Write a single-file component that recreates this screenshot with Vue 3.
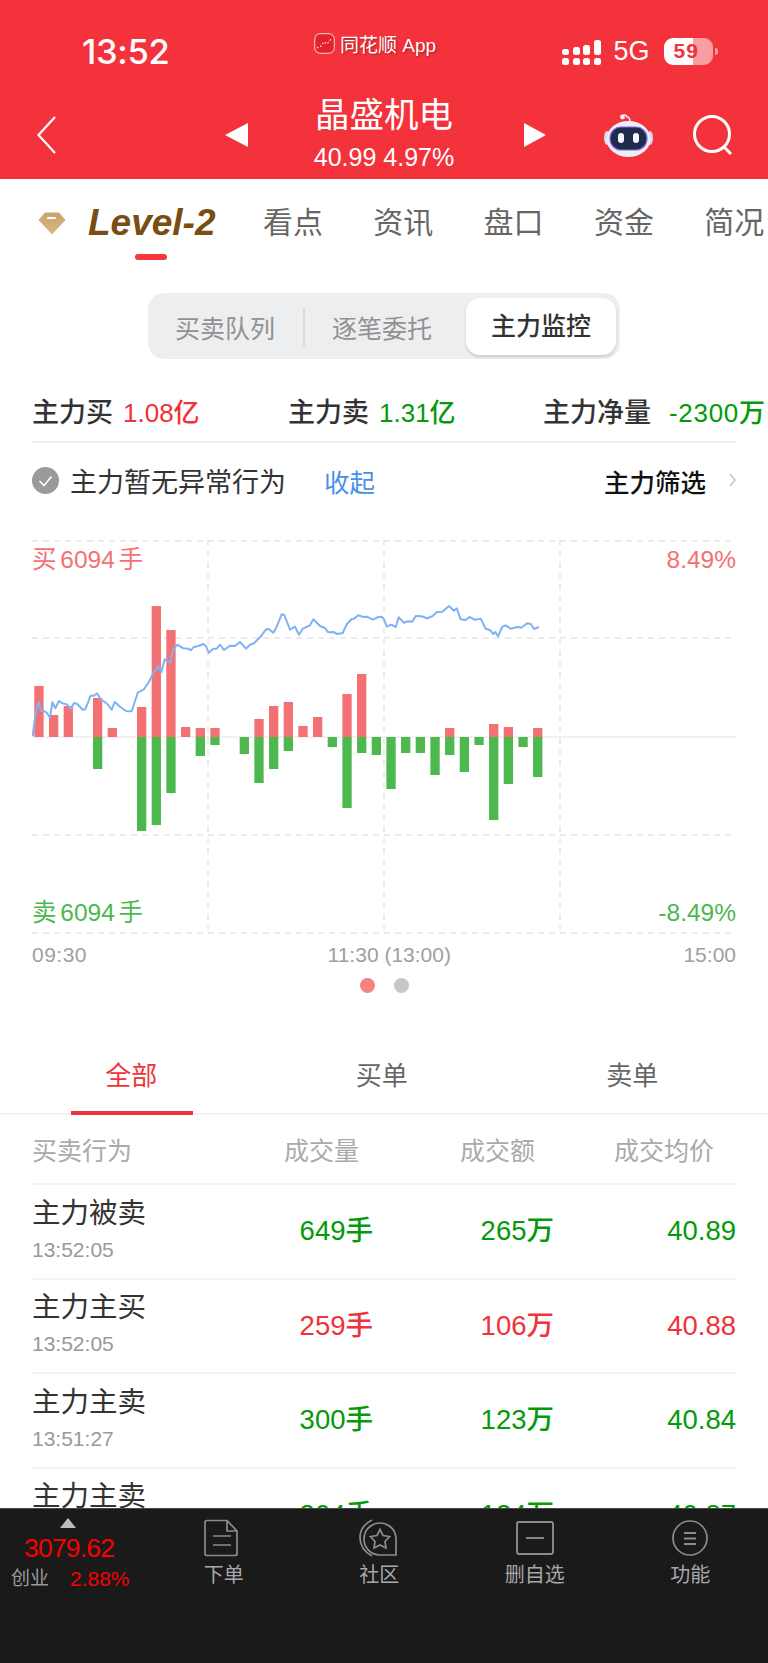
<script setup>
// bars measured as [buy, sell] heights in px, one entry per 14.67px slot
const bars = [
  [51, 0], [22, 0], [31, 0], [0, 0], [39, 32], [9, 0], [0, 0], [30, 94], [131, 88], [107, 56],
  [10, 0], [9, 19], [9, 8], [0, 0], [0, 17], [18, 46], [31, 32], [35, 14], [11, 0], [20, 0],
  [0, 10], [43, 71], [63, 16], [0, 18], [0, 52], [0, 16], [0, 16], [0, 38], [9, 18], [0, 35],
  [0, 8], [13, 83], [10, 47], [0, 10], [9, 40]
]

const rawLine = [
  [98,648],[103,610],[110,565],[116,545],[122,572],[130,572],[140,578],[150,593],[157,547],[166,565],
  [177,543],[187,550],[200,553],[212,567],[222,549],[232,552],[248,569],[256,568],[272,527],[282,527],
  [291,520],[302,538],[322,552],[335,569],[344,546],[360,560],[378,573],[395,574],[413,518],[432,508],
  [448,484],[462,455],[475,439],[484,457],[494,418],[510,428],[520,388],[532,374],[550,385],[565,386],
  [572,391],[580,382],[595,378],[610,372],[618,378],[626,398],[640,386],[650,386],[660,374],[672,390],
  [690,377],[705,378],[720,366],[738,386],[750,374],[762,370],[780,352],[798,328],[806,327],[820,338],
  [828,325],[845,283],[853,285],[870,329],[885,320],[897,344],[908,326],[930,316],[940,298],[960,318],
  [975,324],[985,337],[1000,336],[1012,342],[1028,339],[1040,313],[1055,297],[1062,296],[1075,286],[1090,291],
  [1100,290],[1118,299],[1135,291],[1145,290],[1152,298],[1160,320],[1174,314],[1187,321],[1196,292],[1212,308],
  [1224,304],[1237,305],[1247,288],[1264,289],[1282,295],[1297,289],[1310,277],[1327,275],[1347,258],[1362,272],
  [1370,265],[1382,298],[1397,300],[1408,291],[1424,299],[1442,296],[1457,326],[1470,330],[1480,342],[1486,336],
  [1494,349],[1507,320],[1517,316],[1532,326],[1552,321],[1564,323],[1582,310],[1592,312],[1602,327],[1617,321]
]
// traced from a 3x crop whose origin is (0,520); the svg starts at (32,540)
const linePoints = rawLine.map(([x, y]) => `${(x / 3 - 32).toFixed(1)},${(y / 3 - 20).toFixed(1)}`).join(' ')

const tabs = ['看点', '资讯', '盘口', '资金', '简况']

const rows = [
  { name: '主力被卖', time: '13:52:05', vol: '649手', amt: '265万', price: '40.89', up: false },
  { name: '主力主买', time: '13:52:05', vol: '259手', amt: '106万', price: '40.88', up: true },
  { name: '主力主卖', time: '13:51:27', vol: '300手', amt: '123万', price: '40.84', up: false },
  { name: '主力主卖', time: '13:51:02', vol: '304手', amt: '124万', price: '40.87', up: false }
]
</script>

<template>
  <div class="page">
    <div class="main">
      <header class="head">
        <div class="status">
          <span class="clock">13:52</span>
          <span class="source">
            <svg class="source-icon" width="21" height="21" viewBox="0 0 21 21">
              <rect x="0.7" y="0.7" width="19.6" height="19.6" rx="5.5" fill="#e5212b" stroke="#f9b4b7" stroke-width="1.2" />
              <path d="M3 15 L7 13 L10 9 L13 11 L17 6" fill="none" stroke="#fff" stroke-width="1.1" stroke-dasharray="1.5 2" />
            </svg>
            同花顺 App
          </span>
          <span class="signal">
            <i v-for="h in [6, 8, 10, 15]" :key="h" class="sig-col">
              <b :style="{ height: h + 'px' }"></b>
              <b class="sig-dot"></b>
            </i>
          </span>
          <span class="net">5G</span>
          <span class="battery"><span class="battery-num">59</span></span>
          <span class="battery-tip"></span>
        </div>

        <div class="nav">
          <svg class="back" width="19" height="38" viewBox="0 0 19 38">
            <path d="M18 1 L1.5 19 L18 37" fill="none" stroke="#fff" stroke-width="2.2" />
          </svg>
          <span class="arrow arrow-left"></span>
          <div class="stock">
            <div class="stock-name">晶盛机电</div>
            <div class="stock-price">40.99 4.97%</div>
          </div>
          <span class="arrow arrow-right"></span>
          <svg class="robot" width="49" height="44" viewBox="0 0 49 44">
            <path d="M18 6 C17 1 23 1 23 4 C25 4 26 6 26 9" fill="none" stroke="#e8e6f5" stroke-width="1.6" />
            <circle cx="18.5" cy="4" r="2.4" fill="#f1effa" />
            <ellipse cx="3" cy="25" rx="3" ry="7" fill="#d9d7ea" />
            <ellipse cx="46" cy="25" rx="3" ry="7" fill="#d9d7ea" />
            <ellipse cx="24.5" cy="26" rx="22" ry="18" fill="#eeeef8" />
            <rect x="6" y="14" width="37" height="23" rx="11" fill="#1f2b4a" stroke="#8a6ce0" stroke-width="1.2" />
            <rect x="14" y="20" width="6" height="10" rx="3" fill="#f4f5fb" />
            <rect x="29" y="20" width="6" height="10" rx="3" fill="#f4f5fb" />
          </svg>
          <svg class="search" width="42" height="42" viewBox="0 0 42 42">
            <circle cx="20" cy="20" r="17.5" fill="none" stroke="#fff" stroke-width="3" />
            <path d="M31 32 L39 40" stroke="#fff" stroke-width="3" />
          </svg>
        </div>
      </header>

      <nav class="tabs">
        <svg class="gem" width="28" height="23" viewBox="0 0 28 23">
          <defs>
            <linearGradient id="gemFill" x1="0" y1="0" x2="0" y2="1">
              <stop offset="0" stop-color="#c8a26c" />
              <stop offset="1" stop-color="#d9b988" />
            </linearGradient>
          </defs>
          <path d="M7 0.5 H21 L27.5 8 L14 22.5 L0.5 8 Z" fill="url(#gemFill)" stroke-linejoin="round" />
          <rect x="9" y="5" width="9" height="2" rx="1" fill="#fff" />
        </svg>
        <span class="level">Level-2</span>
        <span v-for="t in tabs" :key="t" class="tab">{{ t }}</span>
        <span class="tab-mark"></span>
      </nav>

      <div class="seg-wrap">
        <div class="seg">
          <span class="seg-item">买卖队列</span>
          <span class="seg-line"></span>
          <span class="seg-item">逐笔委托</span>
          <span class="seg-item seg-on">主力监控</span>
        </div>
      </div>

      <section class="stats">
        <div class="stat stat-a"><span class="stat-label">主力买</span><span class="stat-val up">1.08亿</span></div>
        <div class="stat stat-b"><span class="stat-label">主力卖</span><span class="stat-val down">1.31亿</span></div>
        <div class="stat"><span class="stat-label">主力净量</span><span class="stat-val down net-val">-2300万</span></div>
      </section>

      <section class="notice">
        <svg width="27" height="27" viewBox="0 0 27 27">
          <circle cx="13.5" cy="13.5" r="13.5" fill="#9a9a9a" />
          <path d="M7.5 14 L12 18.5 L19.5 9.5" fill="none" stroke="#fff" stroke-width="1.6" />
        </svg>
        <span class="notice-text">主力暂无异常行为</span>
        <span class="notice-fold">收起</span>
        <span class="notice-filter">主力筛选</span>
        <svg width="7" height="14" viewBox="0 0 7 14">
          <path d="M1 1 L6 7 L1 13" fill="none" stroke="#aaa" stroke-width="1.1" />
        </svg>
      </section>

      <section class="chart">
        <svg class="chart-svg" width="704" height="394" viewBox="0 0 704 394">
          <g stroke="#e6e6e6" stroke-width="1.4" stroke-dasharray="6 5" fill="none">
            <path d="M0 0.7 H704 M0 98 H704 M0 295 H704 M0 393 H704" />
            <path d="M176 0 V393 M352 0 V393 M528 0 V393" />
          </g>
          <path d="M0 197 H704" stroke="#ececec" stroke-width="1.6" />
          <g v-for="(b, i) in bars" :key="i">
            <rect v-if="b[0]" :x="2.3 + i * 14.67" :y="197 - b[0]" width="9.3" :height="b[0]" fill="#f37172" />
            <rect v-if="b[1]" :x="2.3 + i * 14.67" y="197" width="9.3" :height="b[1]" fill="#4db84d" />
          </g>
          <polyline :points="linePoints" fill="none" stroke="#7fb2f5" stroke-width="2" stroke-linejoin="round" />
        </svg>
        <span class="chart-label tl">买 6094 手</span>
        <span class="chart-label tr">8.49%</span>
        <span class="chart-label bl">卖 6094 手</span>
        <span class="chart-label br">-8.49%</span>
      </section>

      <div class="axis">
        <span class="axis-end">09:30</span>
        <span class="axis-mid">11:30 (13:00)</span>
        <span>15:00</span>
      </div>

      <div class="dots">
        <i class="dot dot-on"></i>
        <i class="dot"></i>
      </div>

      <div class="filter">
        <span class="filter-item filter-on">全部</span>
        <span class="filter-item">买单</span>
        <span class="filter-item">卖单</span>
      </div>

      <section class="table">
        <div class="thead">
          <span class="c-name">买卖行为</span>
          <span class="c-vol">成交量</span>
          <span class="c-amt">成交额</span>
          <span class="c-price">成交均价</span>
        </div>
        <div v-for="(r, i) in rows" :key="i" class="row" :class="r.up ? 'up' : 'down'">
          <div class="c-name">
            <div class="row-name">{{ r.name }}</div>
            <div class="row-time">{{ r.time }}</div>
          </div>
          <span class="row-num r-vol">{{ r.vol }}</span>
          <span class="row-num r-amt">{{ r.amt }}</span>
          <span class="row-num r-price">{{ r.price }}</span>
        </div>
      </section>
    </div>

    <footer class="bar">
      <div class="index">
        <span class="index-arrow"></span>
        <div class="index-value">3079.62</div>
        <div class="index-line"><span class="index-name">创业</span><span class="index-pct">2.88%</span></div>
      </div>
      <div class="bar-item">
        <svg class="order-icon" width="36" height="38" viewBox="0 0 36 38" fill="none" stroke="#8c8c8c" stroke-width="1.7">
          <path d="M24 1.5 H4 Q2 1.5 2 3.5 V34.5 Q2 36.5 4 36.5 H32 Q34 36.5 34 34.5 V12 Z M24 1.5 V12 H34" />
          <path d="M10 17 H28 M10 26 H28" />
        </svg>
        <span>下单</span>
      </div>
      <div class="bar-item">
        <svg width="42" height="38" viewBox="0 0 42 38" fill="none" stroke="#8c8c8c" stroke-width="1.7">
          <path d="M14 1 C-2 9 -2 28 14 37" />
          <path d="M22 4 C31 4 38 11 38 20 V36 H22 C13 36 6 29 6 20 C6 11 13 4 22 4 Z" />
          <path d="M22 10.5 L25 16.5 L31.5 17.5 L27 22.5 L28 29 L22 26 L16 29 L17 22.5 L12.5 17.5 L19 16.5 Z" />
        </svg>
        <span>社区</span>
      </div>
      <div class="bar-item">
        <svg width="38" height="38" viewBox="0 0 38 38" fill="none" stroke="#8c8c8c" stroke-width="1.9">
          <rect x="1" y="3" width="36" height="32" rx="2" />
          <path d="M10 19 H28" />
        </svg>
        <span>删自选</span>
      </div>
      <div class="bar-item">
        <svg width="38" height="38" viewBox="0 0 38 38" fill="none" stroke="#8c8c8c" stroke-width="1.7">
          <circle cx="19" cy="19" r="17" />
          <path d="M13 14 H25 M13 19.5 H25 M13 25 H25" stroke-width="2" />
        </svg>
        <span>功能</span>
      </div>
    </footer>
  </div>
</template>

<style>
html, body {
  margin: 0;
  background: #fff;
}
</style>

<style scoped>
.page {
  width: 768px;
  height: 1663px;
  display: flex;
  flex-direction: column;
  overflow: hidden;
  font-family: "Liberation Sans", "Noto Sans CJK SC", sans-serif;
  background: #fff;
}

.main {
  flex: 1;
  overflow: hidden;
}

.head {
  height: 179px;
  background: #f4323b;
  color: #fff;
}

.status {
  height: 100px;
  display: flex;
  align-items: center;
  box-sizing: border-box;
  padding-left: 82px;
}

.clock {
  width: 218px;
  font-family: Inter, sans-serif;
  font-size: 34.5px;
  font-weight: 500;
  letter-spacing: -0.3px;
  margin-top: 2px;
}

.source {
  width: 248px;
  margin-left: 14px;
  margin-top: -14px;
  display: flex;
  align-items: center;
  gap: 5px;
  font-size: 19px;
  text-shadow: 1px 1px 2px rgba(0, 0, 0, 0.35);
}

.signal {
  display: flex;
  gap: 3.5px;
  margin-top: 2px;
}

.sig-col {
  display: flex;
  flex-direction: column;
  justify-content: flex-end;
  gap: 3px;
  height: 27px;
}

.sig-col b {
  display: block;
  width: 7px;
  background: #fff;
  border-radius: 2.5px;
}

.sig-col .sig-dot {
  height: 7px;
}

.net {
  margin-left: 13px;
  font-size: 27px;
  margin-top: 2px;
}

.battery {
  margin-left: 14px;
  margin-top: 2px;
  width: 49px;
  height: 27px;
  border-radius: 9px;
  background: linear-gradient(90deg, #fff 0, #fff 29px, #f99ea2 29px);
  color: #f4323b;
  font-size: 21px;
  font-weight: 700;
  display: flex;
  align-items: center;
  box-sizing: border-box;
  padding-left: 10px;
}

.battery-num {
  letter-spacing: 1px;
}

.battery-tip {
  width: 3px;
  height: 7px;
  margin-left: 2px;
  margin-top: 2px;
  border-radius: 0 3px 3px 0;
  background: #f99ea2;
}

.nav {
  height: 89px;
  margin-top: -10px;
  display: flex;
  align-items: center;
  padding-left: 37px;
}

.back {
  margin-right: 169px;
}

.arrow {
  width: 0;
  height: 0;
  border-top: 12.5px solid transparent;
  border-bottom: 12.5px solid transparent;
}

.arrow-left {
  border-right: 23px solid #fff;
}

.arrow-right {
  border-left: 22px solid #fff;
}

.stock {
  width: 272px;
  margin-right: 4px;
  margin-top: -3px;
  text-align: center;
}

.stock-name {
  font-size: 34.5px;
  line-height: 42px;
}

.stock-price {
  font-size: 25px;
  line-height: 30px;
  font-weight: 500;
  margin-top: 6px;
}

.robot {
  margin-left: 58px;
}

.search {
  margin-left: 39px;
}

.tabs {
  position: relative;
  height: 90px;
  display: flex;
  align-items: center;
  padding-left: 38px;
  box-sizing: border-box;
  white-space: nowrap;
  margin-bottom: 24px;
}

.gem {
  flex: none;
  margin-right: 22px;
  margin-top: -2px;
}

.level {
  flex: none;
  width: 175px;
  font-size: 37px;
  font-weight: 700;
  font-style: italic;
  color: #7a4d12;
  margin-top: -3px;
}

.tab {
  flex: none;
  width: 110.3px;
  font-size: 30px;
  line-height: 40px;
  color: #666;
  margin-top: -2px;
}

.tab-mark {
  position: absolute;
  left: 135px;
  top: 75px;
  width: 32px;
  height: 6px;
  border-radius: 3px;
  background: #f8373a;
}

.seg-wrap {
  padding-left: 148px;
}

.seg {
  width: 472px;
  height: 66px;
  box-sizing: border-box;
  background: #edeef0;
  border-radius: 16px;
  display: flex;
  align-items: center;
  padding: 5px 4px 4px 27px;
  font-size: 25px;
  color: #919191;
}

.seg-item {
  white-space: nowrap;
}

.seg-line {
  width: 2px;
  height: 38px;
  margin: 0 27px 0 28px;
  background: #d9d9d9;
}

.seg-on {
  margin-left: 34px;
  width: 150px;
  height: 57px;
  line-height: 57px;
  text-align: center;
  border-radius: 14px;
  background: #fff;
  color: #333;
  font-weight: 500;
  box-shadow: 0 2px 3px rgba(0, 0, 0, 0.14);
}

.stats {
  display: flex;
  align-items: center;
  height: 83px;
  box-sizing: border-box;
  padding-top: 19px;
  margin: 0 0 0 32px;
  white-space: nowrap;
  position: relative;
}

.stats::after {
  content: "";
  position: absolute;
  left: 0;
  top: 82px;
  width: 704px;
  height: 2px;
  background: #f0f0f0;
}

.stat {
  display: flex;
  align-items: center;
  gap: 10px;
}

.stat-a {
  width: 256px;
}

.stat-b {
  width: 255px;
}

.stat-label {
  font-size: 27px;
  font-weight: 500;
  color: #333;
}

.stat-val {
  font-size: 26px;
  font-weight: 500;
}

.net-val {
  margin-left: 8px;
  letter-spacing: 0.7px;
}

.up {
  color: #f0323a;
}

.down {
  color: #049a0a;
}

.notice {
  height: 76px;
  display: flex;
  align-items: center;
  margin: 0 32px;
}

.notice-text {
  margin-left: 11px;
  font-size: 27px;
  color: #333;
  white-space: nowrap;
}

.notice-fold {
  margin-left: 38px;
  font-size: 25.5px;
  color: #4790ea;
}

.notice-filter {
  margin-left: auto;
  margin-right: 23px;
  font-size: 25.5px;
  font-weight: 500;
  color: #111;
}

.chart {
  position: relative;
  width: 704px;
  height: 394px;
  margin: 22px 32px 0;
}

.chart-svg {
  display: block;
}

.chart-label {
  position: absolute;
  font-size: 24.5px;
  line-height: 30px;
  white-space: nowrap;
  word-spacing: -3px;
}

.tl {
  left: 0;
  top: 5px;
  color: #f37172;
}

.tr {
  right: 0;
  top: 5px;
  color: #f37172;
}

.bl {
  left: 0;
  top: 358px;
  color: #4db84d;
}

.br {
  right: 0;
  top: 358px;
  color: #4db84d;
}

.axis {
  display: flex;
  justify-content: space-between;
  margin: 0 32px;
  padding-top: 8px;
  font-size: 21px;
  line-height: 26px;
  color: #a0a0a0;
}

.axis-end {
  letter-spacing: 0.5px;
}

.axis-mid {
  margin-left: 8px;
}

.dots {
  display: flex;
  justify-content: center;
  gap: 19px;
  margin-top: 10px;
}

.dot {
  width: 15px;
  height: 15px;
  border-radius: 50%;
  background: #c6c6c6;
}

.dot-on {
  background: #f58383;
}

.filter {
  display: grid;
  grid-template-columns: repeat(3, 250.5px);
  height: 122px;
  padding: 0 0 0 6px;
  box-sizing: border-box;
  border-bottom: 2px solid #f2f2f2;
  align-items: end;
}

.filter-item {
  position: relative;
  height: 67px;
  text-align: center;
  font-size: 26px;
  line-height: 60px;
  color: #666;
}

.filter-on {
  color: #f0333a;
}

.filter-on::after {
  content: "";
  position: absolute;
  left: 65px;
  bottom: -2px;
  width: 122px;
  height: 4px;
  background: #f0333a;
}

.table {
  margin: 0 32px;
}

.thead {
  height: 70px;
  display: flex;
  align-items: center;
  border-bottom: 2px solid #f3f3f3;
  font-size: 25px;
  color: #aaa;
  box-sizing: border-box;
}

.thead span {
  white-space: nowrap;
}

.thead .c-name {
  width: 252px;
}

.thead .c-vol {
  width: 176px;
}

.thead .c-amt {
  width: 154px;
}

.row {
  height: 94.5px;
  box-sizing: border-box;
  display: flex;
  align-items: center;
  border-bottom: 2px solid #f3f3f3;
}

.row .c-name {
  width: 264px;
  margin-top: -3px;
}

.row-name {
  font-size: 28.5px;
  line-height: 36px;
  color: #333;
}

.row-time {
  margin-top: 4px;
  font-size: 21px;
  line-height: 30px;
  color: #999;
}

.row-num {
  font-size: 27.5px;
  line-height: 34px;
  font-weight: 500;
  text-align: right;
  white-space: nowrap;
}

.r-vol {
  width: 77px;
}

.r-amt {
  width: 181px;
}

.r-price {
  width: 182px;
}

.bar {
  height: 155px;
  flex: none;
  box-sizing: border-box;
  background: #1a1a1a;
  border-top: 1px solid #474747;
  display: grid;
  grid-template-columns: 146px repeat(4, 155.5px);
  align-items: start;
  color: #a8a8a8;
}

.index {
  padding-top: 9px;
}

.index-arrow {
  display: block;
  width: 0;
  height: 0;
  margin-left: 60px;
  border-left: 8.5px solid transparent;
  border-right: 8.5px solid transparent;
  border-bottom: 10px solid #bdbdbd;
}

.index-value {
  margin-left: 24px;
  font-size: 26.5px;
  line-height: 30px;
  letter-spacing: -0.8px;
  margin-top: 5px;
  color: #f70000;
  font-weight: 500;
}

.index-line {
  display: flex;
  align-items: center;
  margin-top: 2px;
  margin-left: 11px;
}

.index-name {
  width: 59px;
  font-size: 19px;
  line-height: 28px;
  color: #999;
}

.index-pct {
  font-size: 21px;
  line-height: 28px;
  color: #f70000;
}

.bar-item {
  display: flex;
  flex-direction: column;
  align-items: center;
  padding-top: 10px;
  font-size: 20px;
  line-height: 28px;
}

.bar-item span {
  margin-top: 4px;
}

.order-icon {
  margin-left: -6px;
}
</style>
